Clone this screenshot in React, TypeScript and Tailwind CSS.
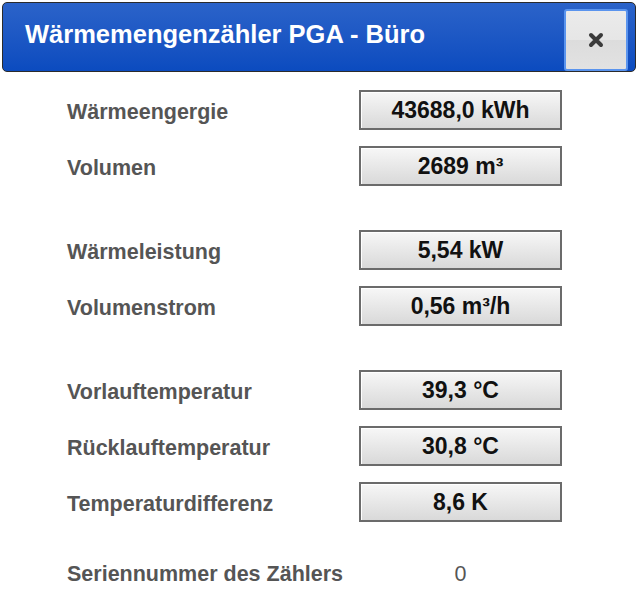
import { ReactNode } from "react";

type Row = { label: string; value: string; gapBefore?: boolean };

const rows: Row[] = [
  { label: "Wärmeengergie", value: "43688,0 kWh" },
  { label: "Volumen", value: "2689 m³" },
  { label: "Wärmeleistung", value: "5,54 kW", gapBefore: true },
  { label: "Volumenstrom", value: "0,56 m³/h" },
  { label: "Vorlauftemperatur", value: "39,3 °C", gapBefore: true },
  { label: "Rücklauftemperatur", value: "30,8 °C" },
  { label: "Temperaturdifferenz", value: "8,6 K" },
];

function ValueBox({ children }: { children: ReactNode }) {
  return (
    <div className="flex h-[40px] w-[203px] items-center justify-center border-2 border-[#6b6b6b] bg-gradient-to-b from-[#f7f7f7] to-[#d9d9d9] text-[23px] font-bold text-[#111] shadow-[inset_1px_1px_0_#ffffff]">
      {children}
    </div>
  );
}

export default function App() {
  return (
    <div className="h-[600px] w-[638px] overflow-hidden bg-white font-['Liberation_Sans',Arial,sans-serif]">
      <div className="mx-[2px] mt-[2px] flex h-[70px] items-end justify-between rounded-[5px] border border-[#2b2b2b] bg-gradient-to-b from-[#2b63c9] to-[#0b4bbf] pl-[22px] pr-[7px]">
        <h1 className="mb-[18px] text-[25.5px] font-bold text-white">Wärmemengenzähler PGA - Büro</h1>
        <button
          type="button"
          className="flex h-[62px] w-[64px] items-center justify-center rounded-[3px] border-2 border-[#5a94ee] bg-[linear-gradient(#ebebeb_0%,#e6e6e6_50%,#dcdcdc_50%,#e2e2e2_100%)]"
        >
          <svg width="16" height="16" viewBox="0 0 16 16">
            <path d="M3 3L13 13M13 3L3 13" stroke="#3a3a3a" strokeWidth="4" strokeLinecap="round" />
          </svg>
        </button>
      </div>

      <div className="flex flex-col pt-[10px]">
        {rows.map((row) => (
          <div
            key={row.label}
            className={`flex h-[56px] items-center ${row.gapBefore ? "mt-[28px]" : ""}`}
          >
            <div className="mt-[4px] w-[359px] pl-[67px] text-[21.5px] font-bold text-[#555]">{row.label}</div>
            <ValueBox>{row.value}</ValueBox>
          </div>
        ))}
        <div className="mt-[14px] flex h-[56px] items-center">
          <div className="mt-[4px] w-[359px] whitespace-nowrap pl-[67px] text-[21.5px] font-bold text-[#555]">
            Seriennummer des Zählers
          </div>
          <div className="mt-[4px] w-[203px] text-center text-[21.5px] text-[#555]">0</div>
        </div>
      </div>
    </div>
  );
}
